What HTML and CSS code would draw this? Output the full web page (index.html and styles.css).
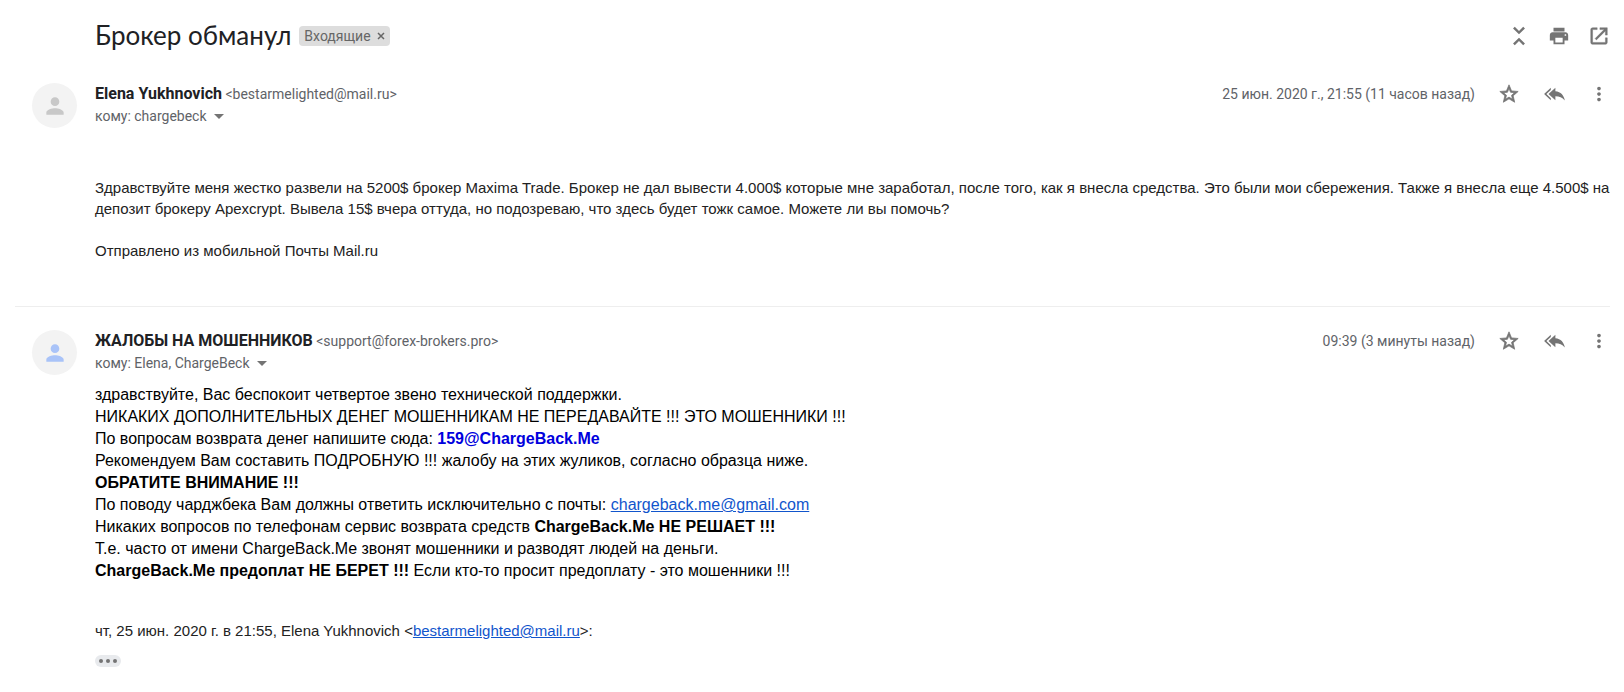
FILE: index.html
```html
<!DOCTYPE html>
<html lang="ru">
<head>
  <meta charset="UTF-8">
  <meta name="viewport" content="width=device-width, initial-scale=1.0">
  <title>Брокер обманул</title>
  <link rel="stylesheet" href="styles.css">
</head>
<body>
  <main class="thread">
    <header class="thread-header">
      <h1>Брокер обманул</h1>
      <div class="label">
        <span>Входящие</span>
        <button class="label-remove" aria-label="Удалить ярлык">
          <svg width="8" height="8" viewBox="0 0 8 8"><path d="M1 1l6 6M7 1L1 7" stroke="#666" stroke-width="1.500"/></svg>
        </button>
      </div>
      <div class="toolbar">
        <button class="icon" aria-label="Свернуть все">
          <svg viewBox="0 0 24 24"><path d="M7.400 2L5.500 3.900l6.500 6.300 6.500-6.300L16.600 2 12 6.500zM7.400 22l-1.900-1.900 6.500-6.300 6.500 6.300-1.900 1.900L12 17.500z"/></svg>
        </button>
        <button class="icon" aria-label="Печать">
          <svg viewBox="0 0 24 24"><path d="M19 8H5c-1.660 0-3 1.340-3 3v6h4v4h12v-4h4v-6c0-1.660-1.340-3-3-3zm-3 11H8v-5h8v5zm3-7c-.55 0-1-.45-1-1s.45-1 1-1 1 .45 1 1-.45 1-1 1zm-1-9H6v4h12V3z"/></svg>
        </button>
        <button class="icon" aria-label="В новом окне">
          <svg viewBox="0 0 24 24"><path d="M19 19H5V5h5V3H5c-1.110 0-2 .9-2 2v14c0 1.100.89 2 2 2h14c1.100 0 2-.9 2-2v-5h-2v5zM13 3v2h4.590l-9.830 9.830 1.410 1.410L19 6.410V11h2V3h-8z" stroke="#747474" stroke-width=".5"/></svg>
        </button>
      </div>
    </header>

    <article class="message">
      <div class="avatar">
        <svg viewBox="0 0 24 24"><path d="M12 12c2.210 0 4-1.790 4-4s-1.790-4-4-4-4 1.790-4 4 1.790 4 4 4zm0 2c-2.670 0-8 1.340-8 4v2h16v-2c0-2.660-5.330-4-8-4z"/></svg>
      </div>
      <div class="content">
        <div class="message-header">
          <div class="sender">
            <div class="from"><strong>Elena Yukhnovich</strong> <span>&lt;bestarmelighted@mail.ru&gt;</span></div>
            <button class="to">кому: chargebeck <i class="arrow"></i></button>
          </div>
          <div class="date">25 июн. 2020 г., 21:55 (11 часов назад)</div>
          <div class="actions">
            <button class="icon" aria-label="Пометить">
              <svg viewBox="0 0 24 24"><path d="M22 9.240l-7.190-.62L12 2 9.190 8.630 2 9.240l5.460 4.730L5.820 21 12 17.270 18.180 21l-1.630-7.030L22 9.240zM12 15.400l-3.760 2.270 1-4.280-3.320-2.880 4.380-.38L12 6.100l1.710 4.040 4.380.38-3.320 2.880 1 4.280L12 15.400z" stroke="#747474" stroke-width=".8"/></svg>
            </button>
            <button class="icon" aria-label="Ответить всем">
              <svg viewBox="0 0 24 24"><path d="M8.500 7.500V5.300L1.200 12l7.300 6.700v-2.200L3.700 12zM13.500 9V5.300L6 12l7.500 6.700v-4.200c4.500 0 7.500 1.300 10.300 4.500-1-5.500-4.300-9.500-10.300-10z"/></svg>
            </button>
            <button class="icon" aria-label="Ещё">
              <svg viewBox="0 0 24 24"><path d="M12 8c1.100 0 2-.9 2-2s-.9-2-2-2-2 .9-2 2 .9 2 2 2zm0 2c-1.100 0-2 .9-2 2s.9 2 2 2 2-.9 2-2-.9-2-2-2zm0 6c-1.100 0-2 .9-2 2s.9 2 2 2 2-.9 2-2-.9-2-2-2z"/></svg>
            </button>
          </div>
        </div>
        <div class="body mobile">
          <p>Здравствуйте меня жестко развели на 5200$ брокер Maxima Trade. Брокер не дал вывести 4.000$ которые мне заработал, после того, как я внесла средства. Это были мои сбережения. Также я внесла еще 4.500$ на депозит брокеру Apexcrypt. Вывела 15$ вчера оттуда, но подозреваю, что здесь будет тожк самое. Можете ли вы помочь?</p>
          <p>Отправлено из мобильной Почты Mail.ru</p>
        </div>
      </div>
    </article>

    <article class="message">
      <div class="avatar blue">
        <svg viewBox="0 0 24 24"><path d="M12 12c2.210 0 4-1.790 4-4s-1.790-4-4-4-4 1.790-4 4 1.790 4 4 4zm0 2c-2.670 0-8 1.340-8 4v2h16v-2c0-2.660-5.330-4-8-4z"/></svg>
      </div>
      <div class="content">
        <div class="message-header">
          <div class="sender">
            <div class="from"><strong>ЖАЛОБЫ НА МОШЕННИКОВ</strong> <span>&lt;support@forex-brokers.pro&gt;</span></div>
            <button class="to">кому: Elena, ChargeBeck <i class="arrow"></i></button>
          </div>
          <div class="date">09:39 (3 минуты назад)</div>
          <div class="actions">
            <button class="icon" aria-label="Пометить">
              <svg viewBox="0 0 24 24"><path d="M22 9.240l-7.190-.62L12 2 9.190 8.630 2 9.240l5.460 4.730L5.820 21 12 17.270 18.180 21l-1.630-7.030L22 9.240zM12 15.400l-3.760 2.270 1-4.280-3.320-2.880 4.380-.38L12 6.100l1.710 4.040 4.380.38-3.320 2.880 1 4.280L12 15.400z" stroke="#747474" stroke-width=".8"/></svg>
            </button>
            <button class="icon" aria-label="Ответить всем">
              <svg viewBox="0 0 24 24"><path d="M8.500 7.500V5.300L1.200 12l7.300 6.700v-2.200L3.700 12zM13.500 9V5.300L6 12l7.500 6.700v-4.200c4.500 0 7.500 1.300 10.300 4.500-1-5.500-4.300-9.500-10.300-10z"/></svg>
            </button>
            <button class="icon" aria-label="Ещё">
              <svg viewBox="0 0 24 24"><path d="M12 8c1.100 0 2-.9 2-2s-.9-2-2-2-2 .9-2 2 .9 2 2 2zm0 2c-1.100 0-2 .9-2 2s.9 2 2 2 2-.9 2-2-.9-2-2-2zm0 6c-1.100 0-2 .9-2 2s.9 2 2 2 2-.9 2-2-.9-2-2-2z"/></svg>
            </button>
          </div>
        </div>
        <div class="body reply">
          <div>здравствуйте, Вас беспокоит четвертое звено технической поддержки.</div>
          <div>НИКАКИХ ДОПОЛНИТЕЛЬНЫХ ДЕНЕГ МОШЕННИКАМ НЕ ПЕРЕДАВАЙТЕ !!! ЭТО МОШЕННИКИ !!!</div>
          <div>По вопросам возврата денег напишите сюда: <b class="contact">159@ChargeBack.Me</b></div>
          <div>Рекомендуем Вам составить ПОДРОБНУЮ !!! жалобу на этих жуликов, согласно образца ниже.</div>
          <div><b>ОБРАТИТЕ ВНИМАНИЕ !!!</b></div>
          <div>По поводу чарджбека Вам должны ответить исключительно с почты: <a href="mailto:chargeback.me@gmail.com">chargeback.me@gmail.com</a></div>
          <div>Никаких вопросов по телефонам сервис возврата средств <b>ChargeBack.Me НЕ РЕШАЕТ !!!</b></div>
          <div>Т.е. часто от имени ChargeBack.Me звонят мошенники и разводят людей на деньги.</div>
          <div><b>ChargeBack.Me предоплат НЕ БЕРЕТ !!!</b> Если кто-то просит предоплату - это мошенники !!!</div>
        </div>
        <div class="body quote">чт, 25 июн. 2020 г. в 21:55, Elena Yukhnovich &lt;<a href="mailto:bestarmelighted@mail.ru">bestarmelighted@mail.ru</a>&gt;:</div>
        <button class="more" aria-label="Показать скрытый текст"><i></i><i></i><i></i></button>
      </div>
    </article>
  </main>
</body>
</html>
```
FILE: styles.css
```css
body {
  margin: 0;
  background-color: #fff;
  color: #222;
  font-family: Roboto, "Liberation Sans", sans-serif;
  font-size: 14px;
}
button {
  padding: 0;
  border: none;
  background: none;
  font: inherit;
  color: inherit;
  cursor: pointer;
}
a {
  color: #15c;
}
.thread {
  padding: 16px 14px 0 15px;
}
.thread-header {
  display: flex;
  align-items: center;
  height: 40px;
  padding-left: 80px;
}
h1 {
  margin: 0 0 2px;
  font-family: Lato, sans-serif;
  font-size: 26px;
  font-weight: 400;
  color: #202124;
}
.label {
  display: flex;
  align-items: center;
  gap: 6px;
  height: 20px;
  margin-left: 8px;
  padding: 0 5px;
  border-radius: 4px;
  background-color: #ddd;
  color: #666;
}
.label-remove,
.icon {
  display: flex;
}
.toolbar {
  display: flex;
  gap: 18px;
  margin-left: auto;
}
.icon svg {
  width: 22px;
  height: 22px;
  fill: #747474;
}
.message {
  display: flex;
  gap: 18px;
  padding: 27px 0 45px 17px;
}
.message + .message {
  padding-top: 23px;
  border-top: 1px solid #eee;
}
.avatar {
  display: flex;
  flex: none;
  align-items: center;
  justify-content: center;
  width: 45px;
  height: 45px;
  border-radius: 50%;
  background-color: #f3f3f3;
}
.avatar svg {
  width: 26px;
  height: 26px;
  fill: #c8c8c8;
}
.avatar.blue svg {
  fill: #a9c3f8;
}
.content {
  flex: 1;
}
.message-header {
  display: flex;
  line-height: 22px;
  color: #5f6368;
}
.sender {
  flex: 1;
}
.from strong {
  font-size: 16px;
  color: #202124;
}
.to {
  display: flex;
  align-items: center;
  gap: 7px;
}
.arrow {
  border: 5px solid transparent;
  border-top-color: #747474;
  border-bottom: 0;
}
.actions {
  display: flex;
  align-items: flex-start;
  gap: 23px;
  margin-left: 23px;
}
.body {
  font-family: "Liberation Sans", Arial, sans-serif;
  font-size: 15px;
  line-height: 21px;
}
.mobile {
  padding-top: 50px;
}
.mobile p {
  margin: 0 0 21px;
}
.mobile p:last-child {
  margin: 0;
}
.reply {
  margin-top: 10px;
  font-size: 16px;
  line-height: 22px;
  color: #000;
}
.contact {
  color: #00d;
}
.quote {
  margin-top: 38px;
}
.more {
  display: flex;
  align-items: center;
  justify-content: center;
  gap: 3px;
  width: 26px;
  height: 12px;
  margin-top: 14px;
  border-radius: 6px;
  background-color: #e8eaed;
}
.more i {
  width: 4px;
  height: 4px;
  border-radius: 50%;
  background-color: #747474;
}
```
